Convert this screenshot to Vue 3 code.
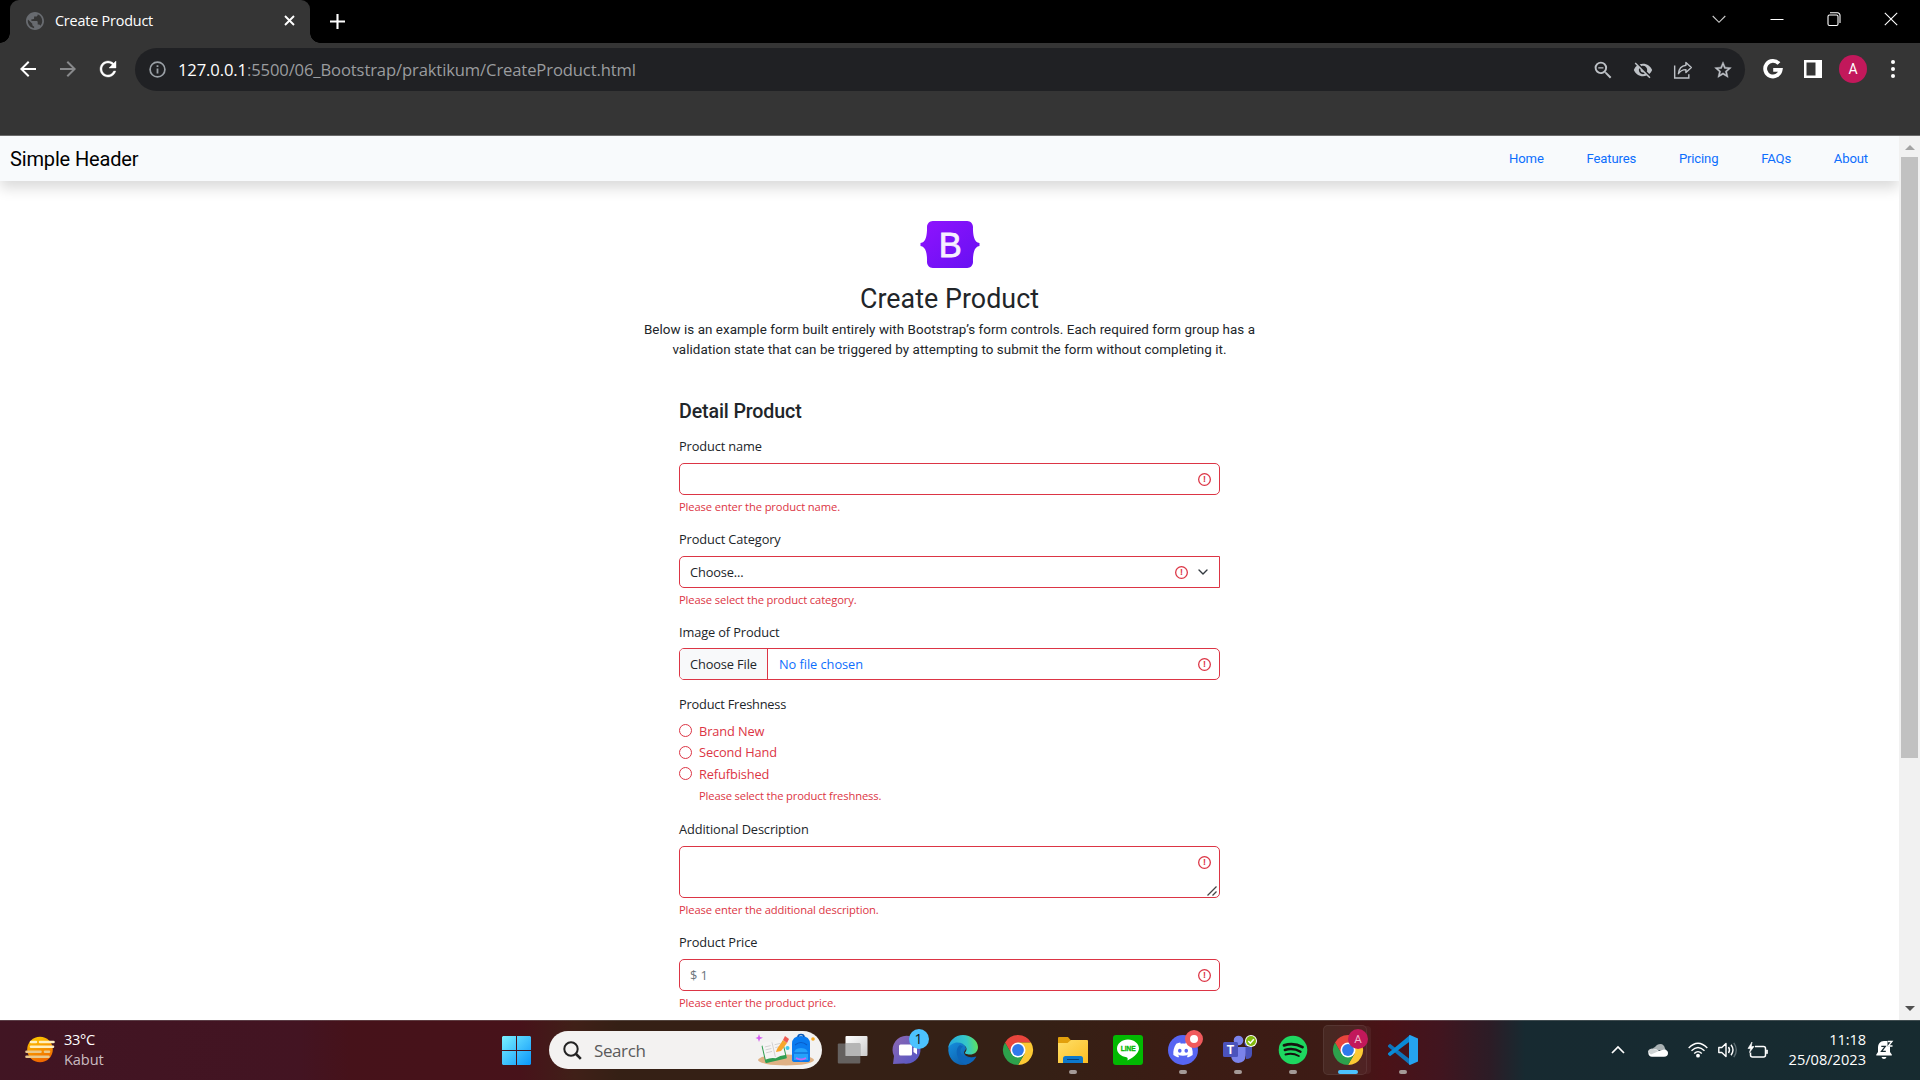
<script setup>
const links = ['Home', 'Features', 'Pricing', 'FAQs', 'About']
const freshness = ['Brand New', 'Second Hand', 'Refufbished']
</script>

<template>
  <div class="desktop">
    <header class="tabstrip">
      <div class="tab">
        <svg class="favicon" viewBox="2 2 20 20"><path fill="#686b70" d="M12 2C6.48 2 2 6.48 2 12s4.48 10 10 10 10-4.48 10-10S17.52 2 12 2zm-1 17.93c-3.95-.49-7-3.85-7-7.93 0-.62.08-1.21.21-1.79L9 15v1c0 1.1.9 2 2 2v1.93zm6.9-2.54c-.26-.81-1-1.39-1.9-1.39h-1v-3c0-.55-.45-1-1-1H8v-2h2c.55 0 1-.45 1-1V7h2c1.1 0 2-.9 2-2v-.41c2.93 1.19 5 4.06 5 7.41 0 2.08-.8 3.97-2.1 5.39z" /></svg>
        <span class="tab-title">Create Product</span>
        <svg class="tab-close" viewBox="0 0 11 11"><path d="M1 1l9 9M10 1l-9 9" stroke="#fff" stroke-width="1.9" /></svg>
      </div>
      <svg class="plus" viewBox="0 0 15 15"><path d="M7.5 0v15M0 7.5h15" stroke="#fff" stroke-width="2.1" /></svg>
      <div class="win-controls">
        <svg viewBox="0 0 14 14"><path d="M.7 4l6.3 6.3L13.300 4" fill="none" stroke="#ccc" stroke-width="1.1" /></svg>
        <svg viewBox="0 0 14 14"><path d="M.5 7.500h13" stroke="#fff" stroke-width="1" /></svg>
        <svg viewBox="0 0 14 14"><g fill="none" stroke="#fff" stroke-width="1.1"><rect x="1" y="3" width="10" height="10.500" rx="1.500" /><path d="M3 .8h7.500a2.500 2.500 0 0 1 2.500 2.500V11" /></g></svg>
        <svg viewBox="0 0 14 14"><path d="M.8 .8l12.400 12.400M13.200 .8L.8 13.200" stroke="#fff" stroke-width="1.100" /></svg>
      </div>
    </header>

    <div class="toolbar">
      <div class="nav-buttons">
        <svg viewBox="0 0 24 24"><path fill="#fff" d="M20 11H7.830l5.590-5.590L12 4l-8 8 8 8 1.410-1.410L7.830 13H20v-2z" /></svg>
        <svg viewBox="0 0 24 24"><path fill="#88898b" d="M4 11h12.170l-5.590-5.590L12 4l8 8-8 8-1.410-1.410L16.170 13H4v-2z" /></svg>
        <svg viewBox="0 0 24 24"><path fill="#fff" stroke="#fff" stroke-width=".4" d="M17.650 6.350C16.200 4.900 14.210 4 12 4c-4.420 0-7.990 3.580-7.990 8s3.570 8 7.990 8c3.730 0 6.840-2.550 7.730-6h-2.080c-.82 2.330-3.040 4-5.650 4-3.310 0-6-2.690-6-6s2.690-6 6-6c1.660 0 3.140.69 4.220 1.780L13 11h7V4l-2.350 2.350z" /></svg>
      </div>
      <div class="omnibox">
        <svg class="info" viewBox="0 0 17 17"><circle cx="8.500" cy="8.500" r="7.400" fill="none" stroke="#9aa0a6" stroke-width="1.700" /><path d="M8.500 7.400v5M8.500 4.200v1.900" stroke="#9aa0a6" stroke-width="1.800" /></svg>
        <span class="url"><b>127.0.0.1</b>:5500/06_Bootstrap/praktikum/CreateProduct.html</span>
        <div class="omni-actions">
          <svg viewBox="0 0 24 24"><path fill="#bdc1c6" d="M15.500 14h-.79l-.28-.27A6.471 6.471 0 0 0 16 9.500 6.500 6.500 0 1 0 9.500 16c1.610 0 3.090-.59 4.230-1.570l.27.28v.79l5 4.990L20.490 19l-4.990-5zm-6 0C7.010 14 5 11.990 5 9.500S7.010 5 9.500 5 14 7.010 14 9.500 11.990 14 9.500 14zM6.800 8.800h5.400v1.400H6.800z" transform="translate(-1.500 -1.500) scale(1.150)" /></svg>
          <svg viewBox="0 0 24 24"><path fill="#bdc1c6" d="M12 7c2.760 0 5 2.240 5 5 0 .65-.13 1.260-.36 1.830l2.920 2.920c1.510-1.260 2.700-2.890 3.430-4.750-1.730-4.390-6-7.500-11-7.500-1.400 0-2.740.25-3.980.7l2.160 2.160C10.740 7.130 11.350 7 12 7zM2 4.270l2.280 2.280.46.46C3.080 8.300 1.780 10.020 1 12c1.730 4.390 6 7.500 11 7.500 1.550 0 3.030-.3 4.380-.84l.42.42L19.730 22 21 20.730 3.270 3 2 4.270zM7.530 9.800l1.550 1.550c-.05.21-.08.43-.08.65 0 1.660 1.340 3 3 3 .22 0 .44-.03.65-.08l1.550 1.550c-.67.33-1.410.53-2.200.53-2.760 0-5-2.240-5-5 0-.79.2-1.530.53-2.200z" /></svg>
          <svg viewBox="0 0 24 24"><g fill="none" stroke="#bdc1c6" stroke-width="1.700"><path d="M2 6.500V21.500h17v-4.500" /><path d="M15.500 3l6.500 6-6.500 6v-3.500c-4 0-7 1.500-9 5 .5-5.500 3.500-9.500 9-10.200z" stroke-linejoin="round" /></g></svg>
          <svg viewBox="0 0 24 24"><path fill="#bdc1c6" stroke="#bdc1c6" stroke-width=".5" d="M22 9.240l-7.190-.62L12 2 9.190 8.630 2 9.240l5.460 4.730L5.820 21 12 17.270 18.180 21l-1.630-7.030L22 9.240zM12 15.400l-3.760 2.270 1-4.280-3.320-2.880 4.380-.38L12 6.100l1.710 4.040 4.380.38-3.320 2.880 1 4.280L12 15.400z" /></svg>
        </div>
      </div>
      <div class="chrome-actions">
        <svg viewBox="0 0 20 20" width="20" height="20"><path d="M15.900 4.600A7.800 7.800 0 1 0 17.700 10.800H10.200" fill="none" stroke="#fff" stroke-width="3.800" /></svg>
        <svg class="panel" viewBox="0 0 18 18" width="18" height="18"><path fill="#fff" fill-rule="evenodd" d="M0 0h18v18H0zM2.500 2.500v13h9v-13z" /></svg>
        <span class="avatar">A</span>
        <svg viewBox="0 0 4 18" width="4" height="18"><circle cx="2" cy="2" r="2" fill="#fff" /><circle cx="2" cy="9" r="2" fill="#fff" /><circle cx="2" cy="16" r="2" fill="#fff" /></svg>
      </div>
    </div>

    <div class="viewport">
      <main class="page">
        <nav class="navbar">
          <span class="brand">Simple Header</span>
          <div class="links"><a v-for="l in links" :key="l">{{ l }}</a></div>
        </nav>

        <svg class="logo" viewBox="0 0 118 94">
          <defs><linearGradient id="bs" x1="0" y1="0" x2="1" y2="1"><stop offset="0" stop-color="#9013fe" /><stop offset="1" stop-color="#6610f2" /></linearGradient></defs>
          <path fill="url(#bs)" d="M24.509 0c-6.733 0-11.715 5.893-11.492 12.284.214 6.140-.064 14.092-2.066 20.577C8.943 39.365 5.547 43.485 0 44.014v5.972c5.547.529 8.943 4.649 10.951 11.153 2.002 6.485 2.280 14.437 2.066 20.577C12.794 88.106 17.776 94 24.510 94H93.500c6.733 0 11.714-5.893 11.491-12.284-.214-6.140.064-14.092 2.066-20.577 2.009-6.504 5.396-10.624 10.943-11.153v-5.972c-5.547-.529-8.934-4.649-10.943-11.153-2.002-6.484-2.280-14.437-2.066-20.577C105.214 5.894 100.233 0 93.500 0H24.508z" />
          <text x="59.500" y="71" text-anchor="middle" font-family="Liberation Sans, sans-serif" font-size="69" fill="#f6f0ff" stroke="#f6f0ff" stroke-width="1.600">B</text>
        </svg>
        <h2>Create Product</h2>
        <p class="lead">Below is an example form built entirely with Bootstrap’s form controls. Each required form group has a<br>validation state that can be triggered by attempting to submit the form without completing it.</p>

        <form>
          <h4>Detail Product</h4>

          <section class="group">
            <label>Product name</label>
            <div class="control"><i class="alert">!</i></div>
            <p class="error">Please enter the product name.</p>
          </section>

          <section class="group">
            <label>Product Category</label>
            <div class="control select">
              <span>Choose...</span><i class="alert">!</i>
              <svg class="caret" viewBox="0 0 10 6"><path d="M1 1l4 4 4-4" fill="none" stroke="#343a40" stroke-width="1.400" stroke-linecap="round" stroke-linejoin="round" /></svg>
            </div>
            <p class="error">Please select the product category.</p>
          </section>

          <section class="group image">
            <label>Image of Product</label>
            <div class="control file"><span class="file-btn">Choose File</span><span class="file-name">No file chosen</span><i class="alert">!</i></div>
          </section>

          <section class="group fresh">
            <label>Product Freshness</label>
            <div v-for="f in freshness" :key="f" class="radio"><i></i><span>{{ f }}</span></div>
            <p class="error">Please select the product freshness.</p>
          </section>

          <section class="group">
            <label>Additional Description</label>
            <div class="control area">
              <i class="alert">!</i>
              <svg class="grip" viewBox="0 0 10 10"><path d="M.5 9.500l9-9M5.500 9.500l4-4" stroke="#444" stroke-width="1.300" /></svg>
            </div>
            <p class="error">Please enter the additional description.</p>
          </section>

          <section class="group">
            <label>Product Price</label>
            <div class="control"><span class="placeholder">$ 1</span><i class="alert">!</i></div>
            <p class="error">Please enter the product price.</p>
          </section>
        </form>
      </main>
      <aside class="scrollbar">
        <svg viewBox="0 0 10 5"><path d="M0 5l5-5 5 5z" fill="#a3a3a3" /></svg>
        <div class="thumb"></div>
        <svg class="down" viewBox="0 0 10 5"><path d="M0 0l5 5 5-5z" fill="#505050" /></svg>
      </aside>
    </div>

    <footer class="taskbar">
      <div class="weather">
        <svg viewBox="0 0 30 27" width="30" height="27">
          <defs><linearGradient id="sun" x1="0" y1="0" x2=".3" y2="1"><stop offset="0" stop-color="#ffcf00" /><stop offset="1" stop-color="#f06a00" /></linearGradient></defs>
          <circle cx="15" cy="13.500" r="12.800" fill="url(#sun)" />
          <g stroke-width="2.600" stroke-linecap="round"><path d="M6 6h5M15 6h13.500M6 10.800h22" stroke="#fff0c0" /><path d="M1.500 15.800h14M20 15.800h4M1.500 20.800h22" stroke="#eac88c" /></g>
        </svg>
        <div class="weather-text"><span>33°C</span><span>Kabut</span></div>
      </div>

      <div class="center">
        <svg class="start" viewBox="0 0 29 29"><defs><linearGradient id="win" x1="0" y1="0" x2="1" y2="1"><stop offset="0" stop-color="#7af0ff" /><stop offset="1" stop-color="#0a96fa" /></linearGradient></defs><path fill="url(#win)" d="M1 0h13v14H0V1zM15 0h13l1 1v13H15zM0 15h14v14H1l-1-1zM15 15h14v13l-1 1H15z" /></svg>

        <div class="search">
          <svg class="glass" viewBox="0 0 19 19"><circle cx="8" cy="8" r="6.700" fill="none" stroke="#222" stroke-width="2" /><path d="M12.500 12.500l5.300 5.300" stroke="#222" stroke-width="2.600" /></svg>
          <span>Search</span>
          <svg class="art" viewBox="0 0 60 32">
            <ellipse cx="30" cy="26" rx="28" ry="5.500" fill="#dfb184" />
            <path d="M3 0l1 3 3 .8-3 1.300L3 8l-1-3-2.500-.9L2 3z" fill="#d45cf0" />
            <g transform="rotate(-13 18 17)"><rect x="7" y="9" width="22" height="18" rx="1" fill="#2f9e50" /><path d="M8 7q5-1.500 10 1 5-2.500 10-1v16.500q-5-1-10 1-5-2-10-1z" fill="#f6f4f4" /><path d="M18 8v15M10 11h6M10 14h6M10 17h6M20 11h6M20 14h6" stroke="#ccc" stroke-width=".8" /></g>
            <path d="M21 15l6-9 4 3-6 8-5 1z" fill="#f9a62b" /><path d="M27 6l2-4 4 3-2 4z" fill="#ef5a50" />
            <path d="M36 26V10q0-8 9-8t9 8v16q0 2-3 2H39q-3 0-3-2z" fill="#0a7bf0" /><path d="M42 3q0-2.500 3-2.500T48 3" fill="none" stroke="#0758b8" stroke-width="1.500" /><path d="M38 26v-6q0-6 7-6t7 6v6z" fill="#25a2fb" /><path d="M38 19h14M39 11q6-5 12 0" stroke="#0a5cc9" stroke-width="1.200" fill="none" /><path d="M40 24q5 3 10 0" stroke="#c36af6" stroke-width="2" fill="none" />
            <circle cx="31.500" cy="14" r="2" fill="#3ec8ec" /><circle cx="57" cy="5" r="1.800" fill="#f8aa22" />
          </svg>
        </div>

        <div class="app">
          <svg viewBox="0 0 32 32"><defs><linearGradient id="tv" x1="0" y1="0" x2="1" y2="1"><stop offset="0" stop-color="#fff" /><stop offset="1" stop-color="#ccc" /></linearGradient></defs><rect x="8.500" y="2" width="22" height="20" rx="1" fill="url(#tv)" /><rect x=".8" y="9.500" width="22.500" height="20" rx="1" fill="#707070" fill-opacity=".82" /><path d="M8.500 9.500h14.800V22H8.500z" fill="#b5b5b5" /></svg>
        </div>
        <div class="app">
          <svg viewBox="0 0 32 32"><defs><linearGradient id="ch" x1="0" y1="0" x2="1" y2="1"><stop offset="0" stop-color="#8e68b0" /><stop offset="1" stop-color="#5055c8" /></linearGradient></defs><path fill="url(#ch)" d="M1 30l1-8A14 14 0 1 1 12 29.500z" /><rect x="7" y="10.500" width="13" height="11" rx="1.500" fill="#fff" /><path d="M21.500 14l3.500-2.500v9L21.500 18z" fill="#fff" /></svg>
          <b class="badge count">1</b>
        </div>
        <div class="app">
          <svg viewBox="0 0 32 32"><defs><linearGradient id="e1" x1="0" y1=".3" x2="1" y2=".2"><stop offset="0" stop-color="#25a8e0" /><stop offset=".6" stop-color="#35c8c8" /><stop offset="1" stop-color="#62e554" /></linearGradient><linearGradient id="e2" x1="0" y1="0" x2="1" y2="1"><stop offset="0" stop-color="#1690df" /><stop offset="1" stop-color="#0b4f9b" /></linearGradient></defs>
            <path fill="url(#e2)" d="M1.500 13C3 8 8 7 12 8c5 1 7 4 7 7l-2 3c0 4 5 6.500 12 4.500C26 28 21 31 16 31 7 31 0 23 1.500 13z" />
            <path fill="#0d66ba" d="M13 11c-5 3-5 14 5 19.700C23 30 27 27 29.500 22.500 23 26 14 23 13.500 17.500c0-2 .5-4 2.500-5z" />
            <path fill="url(#e1)" d="M1.200 14C2 7 8 1 16 1s15 6 15 12c0 5-4 7.500-8 7.500-3.500 0-5.500-1-5-2 .5-.8 1.500-1.500 1.500-3.500 0-3-4-6.500-9-6.500-4 0-8 2.500-9.300 5.500z" />
          </svg>
        </div>
        <div class="app"><svg viewBox="0 0 32 32"><use href="#chrome-mark" /></svg></div>
        <div class="app run">
          <svg viewBox="0 0 32 32"><defs><linearGradient id="fo" x1="0" y1="0" x2="1" y2="1"><stop offset="0" stop-color="#ffdf68" /><stop offset="1" stop-color="#fbbd22" /></linearGradient></defs><path d="M1 4q0-1 1-1h9l3 3.500h9V12H1z" fill="#e2a00c" /><path d="M1 9h9.500L14 6h16q1 0 1 1v22H1z" fill="url(#fo)" /><path d="M6 29v-4.500Q6 22 8.500 22h15q2.500 0 2.500 2.500V29z" fill="#0d78cb" /><path d="M10 25.500h12" stroke="#063f78" stroke-width="1" /></svg>
        </div>
        <div class="app">
          <svg viewBox="0 0 32 32"><rect x="1" y="1" width="30" height="30" rx="3" fill="#02b902" /><path d="M16 5.500c-6 0-11 4-11 9 0 4.500 4 8 9.500 8.700 1.500.4 1.200 1.300 1 3.300 4-2 11.500-7 11.500-12 0-5-5-9-11-9z" fill="#fff" /><text x="16.200" y="17.300" text-anchor="middle" font-family="Liberation Sans, sans-serif" font-weight="bold" font-size="6.600" fill="#02b902" stroke="#02b902" stroke-width=".3">LINE</text></svg>
        </div>
        <div class="app run">
          <svg viewBox="0 0 32 32"><circle cx="16" cy="16" r="15" fill="#5765f2" /><path transform="translate(6.300 6.300) scale(.81)" fill="#fff" d="M20.317 4.370a19.791 19.791 0 00-4.885-1.515.074.074 0 00-.079.037c-.211.375-.445.865-.608 1.250-1.845-.276-3.680-.276-5.487 0-.164-.393-.406-.874-.618-1.250a.077.077 0 00-.079-.037 19.736 19.736 0 00-4.885 1.515.07.07 0 00-.032.028C.533 9.046-.319 13.580.099 18.058a.082.082 0 00.031.056c2.053 1.508 4.041 2.423 5.993 3.029a.078.078 0 00.084-.028c.462-.63.873-1.295 1.226-1.994a.076.076 0 00-.042-.106c-.653-.248-1.274-.55-1.872-.892a.077.077 0 01-.008-.128c.126-.094.252-.192.372-.291a.074.074 0 01.078-.011c3.928 1.793 8.180 1.793 12.061 0a.074.074 0 01.079.010c.12.099.246.198.373.292a.077.077 0 01-.007.128 12.299 12.299 0 01-1.873.891.077.077 0 00-.041.107c.36.698.772 1.363 1.225 1.993a.076.076 0 00.084.029c1.961-.607 3.950-1.522 6.002-3.029a.077.077 0 00.031-.055c.5-5.177-.838-9.674-3.549-13.660a.061.061 0 00-.031-.029zM8.020 15.331c-1.183 0-2.157-1.086-2.157-2.419 0-1.333.956-2.419 2.157-2.419 1.211 0 2.176 1.095 2.157 2.419 0 1.333-.956 2.419-2.157 2.419zm7.975 0c-1.183 0-2.157-1.086-2.157-2.419 0-1.333.955-2.419 2.157-2.419 1.211 0 2.176 1.095 2.157 2.419 0 1.333-.946 2.419-2.157 2.419z" /></svg>
          <b class="badge record"></b>
        </div>
        <div class="app run">
          <svg viewBox="0 0 32 32"><circle cx="16.500" cy="6.500" r="4.800" fill="#7b83eb" /><circle cx="26" cy="9" r="3.500" fill="#5059c9" /><path d="M22 13h8v7q0 5-6 5z" fill="#4a53bc" /><path d="M9 13h14.500v8.500q0 7-7.200 7.500Q10 29 9 22z" fill="#7b83eb" /><rect x="1" y="8" width="15" height="15" rx="1.500" fill="#4b53bc" /><text x="8.500" y="19.800" text-anchor="middle" font-family="Liberation Sans, sans-serif" font-weight="bold" font-size="12" fill="#fff">T</text><circle cx="29" cy="7" r="6" fill="#fff" /><circle cx="29" cy="7" r="5" fill="#83b80d" /><path d="M26.300 7l2 2.200 3.500-4" fill="none" stroke="#fff" stroke-width="1.500" /></svg>
        </div>
        <div class="app run">
          <svg viewBox="0 0 32 32"><circle cx="16" cy="16" r="14.300" fill="#1ed760" /><g fill="none" stroke="#15130f" stroke-linecap="round"><path d="M7 11.300q10-3 18.500 1.800" stroke-width="2.800" /><path d="M7.800 16q8.500-2.500 15.700 1.700" stroke-width="2.400" /><path d="M8.500 20.500q7-2 13.300 1.500" stroke-width="1.900" /></g></svg>
        </div>
        <div class="app run active">
          <svg viewBox="0 0 32 32">
            <g id="chrome-mark"><path d="M3 8.500A15 15 0 0 1 29 8.500H16L9.500 20z" fill="#e8453c" /><path d="M29 8.500A15 15 0 0 1 16 31l6.500-11.250L16 8.500z" fill="#fcc934" /><path d="M16 31A15 15 0 0 1 3 8.500l6.500 11.250 13 0z" fill="#2da14c" /><circle cx="16" cy="16" r="7.500" fill="#fff" /><circle cx="16" cy="16" r="5.900" fill="#3079ea" /></g>
          </svg>
          <b class="badge profile">A</b>
        </div>
        <div class="app run">
          <svg viewBox="0 0 32 32"><path d="M1 11.500l2-1.800 20.500 16L23 31 1 12.800z" fill="#0f74bb" /><path d="M1 20.500l2 1.800L23.500 7 23 1 1 19.200z" fill="#0a8ad6" /><path d="M23 1l8 3.500v23L23 31q-1 0-1-1V2q0-1 1-1z" fill="#25a3f0" /></svg>
        </div>
      </div>

      <div class="tray">
        <svg class="up" viewBox="0 0 14 8"><path d="M1 7l6-6 6 6" fill="none" stroke="#fff" stroke-width="1.700" /></svg>
        <svg class="cloud" viewBox="0 0 20 13"><path d="M3 8Q4 4 7 3q2-3 5.500-3T17 4.500L20 9l-9-3z" fill="#a9b1b3" /><path d="M4 12.800A3.800 3.800 0 0 1 3.300 5.300Q8 4 11 7l5-1.500q4 .5 4 3.800T16 12.800z" fill="#fff" /><path d="M0 8q0-3 4-3.500L11 7l-8 3.500z" fill="#cfd4d5" /></svg>
        <svg class="wifi" viewBox="0 0 20 16"><g fill="none" stroke="#fff" stroke-width="1.400"><path d="M.7 6Q10-3.500 19.300 6" /><path d="M3.500 8.800q6.500-6.500 13 0" /><path d="M6.200 11.500q3.800-3.800 7.600 0" /></g><circle cx="10" cy="13.700" r="1.900" fill="#fff" /></svg>
        <svg class="sound" viewBox="0 0 20 18"><g fill="none" stroke="#fff" stroke-width="1.400"><path d="M.8 6.500h3L8 2.500v13l-4.200-4h-3z" stroke-linejoin="round" /><path d="M10.500 6q2 3 0 6M13 3.800q4 5.200 0 10.400" /><path d="M15.800 1.800q5 7.200 0 14.400" stroke="#5b6b70" /></g></svg>
        <svg class="battery" viewBox="0 0 20 17"><path d="M7 4.500h8.500q2 0 2 2v6.500q0 2-2 2h-11q-2 0-2-2v-2.500" fill="none" stroke="#fff" stroke-width="1.500" /><path d="M18.300 8h1.200v3.500h-1.200z" fill="#fff" stroke="#fff" stroke-width=".7" /><path d="M4 0L0 6.500h2.600L1.500 10.500 6 4.500H3.300z" fill="#fff" stroke="#fff" stroke-width=".6" /></svg>
        <div class="clock"><span>11:18</span><span>25/08/2023</span></div>
        <svg class="bell" viewBox="0 0 18 20"><path d="M8 1C4 1 2 4 2 7.500V12L.3 14.500v1h15.500v-1L14 12V1z" fill="#fff" /><path d="M5.500 17h5q-.5 2-2.500 2t-2.500-2z" fill="#fff" /><path d="M5.300 6.300H9.300L5.500 11.300h4.300" fill="none" stroke="#172a30" stroke-width="1.300" /><path d="M11.500 1h5v5.500h-5z" fill="#172a30" /><path d="M11.800 1.500h4.200L12.300 6h4.200" fill="none" stroke="#fff" stroke-width="1.300" /></svg>
      </div>
    </footer>
  </div>
</template>

<style>
body { margin: 0; overflow: hidden; }
</style>

<style scoped>
.desktop { width: 1920px; height: 1080px; display: flex; flex-direction: column; overflow: hidden; font-family: "Open Sans", sans-serif; background: #fff; }
svg { display: block; flex: none; overflow: visible; }

.tabstrip { height: 43px; flex: none; background: #000; display: flex; align-items: center; padding-left: 10px; }
.tab { position: relative; box-sizing: border-box; width: 300px; height: 43px; background: #353535; border-radius: 9px 9px 0 0; display: flex; align-items: center; padding: 0 15px 2px 16px; }
.tab::before, .tab::after { content: ""; position: absolute; bottom: 0; width: 10px; height: 10px; }
.tab::before { left: -10px; background: radial-gradient(circle at 0 0, transparent 9.5px, #353535 10px); }
.tab::after { right: -10px; background: radial-gradient(circle at 100% 0, transparent 9.5px, #353535 10px); }
.favicon { width: 18px; height: 18px; }
.tab-title { color: #fff; font-size: 14.4px; letter-spacing: -.2px; margin-left: 11px; flex: 1; }
.tab-close { width: 11px; height: 11px; }
.plus { width: 15px; height: 15px; margin-left: 20px; }
.win-controls { margin-left: auto; display: flex; gap: 43.2px; padding: 0 22px 6px 0; }
.win-controls svg { width: 14px; height: 14px; }

.toolbar { box-sizing: border-box; height: 93px; flex: none; background: #353535; border-bottom: 1px solid #6a6a6a; display: flex; align-items: flex-start; padding: 5px 0 0 15.500px; }
.nav-buttons { width: 119.500px; display: flex; gap: 16.300px; padding-top: 8.500px; }
.nav-buttons svg { width: 24px; height: 24px; }
.omnibox { width: 1610px; box-sizing: border-box; height: 43px; padding: 0 12.500px 0 14px; border-radius: 22px; background: #202124; display: flex; align-items: center; }
.info { width: 17px; height: 17px; }
.url { font-size: 16.6px; color: #9a9c9f; margin-left: 12px; letter-spacing: -.12px; line-height: 24px; }
.url b { font-weight: 400; color: #fff; }
.omni-actions { margin-left: auto; display: flex; gap: 20px; }
.omni-actions svg { width: 20px; height: 20px; }
.chrome-actions { flex: 1; display: flex; align-items: center; height: 43px; padding: 0 0 2px 17.500px; box-sizing: border-box; }
.chrome-actions .panel { margin: 0 17.500px 0 21px; }
.avatar { width: 28px; height: 28px; margin-right: 23.500px; border-radius: 50%; background: #c2185b; color: #fff; font: 14px/28px Roboto, sans-serif; text-align: center; }

.viewport { height: 884px; flex: none; display: flex; overflow: hidden; }
.page { width: 1899px; color: #212529; font-size: 12.8px; letter-spacing: -.12px; }
.navbar { box-sizing: border-box; height: 45px; padding: 0 31px 0 10px; background: #f8fafc; box-shadow: 0 7px 13px rgba(0, 0, 0, .15); display: flex; align-items: center; justify-content: space-between; font-family: Roboto, sans-serif; }
.brand { color: #000; font-size: 20px; line-height: 24px; letter-spacing: -.15px; padding-top: 1px; }
.links { display: flex; gap: 42.800px; font-size: 13.100px; letter-spacing: -.14px; color: #0d6efd; }
.logo { width: 60px; height: 47px; margin: 40px auto 0; }
h2 { margin: 15px 0 0; height: 32px; font: 400 26.800px/32px Roboto, sans-serif; letter-spacing: .05px; text-align: center; }
.lead { margin: 5px 0 0; text-align: center; font: 13.400px/20px Roboto, sans-serif; letter-spacing: .055px; white-space: nowrap; }
form { width: 541px; margin: 40px auto 0; }
h4 { margin: 0 0 12px; font: 500 19.600px/24px Roboto, sans-serif; letter-spacing: -.12px; }
.group { margin-bottom: 13px; }
label { display: block; height: 20px; line-height: 20px; margin-bottom: 7px; }
.control { position: relative; box-sizing: border-box; height: 32px; border: 1px solid #dc3545; border-radius: 5px; display: flex; align-items: center; padding: 0 8px 0 10px; overflow: hidden; }
.alert { margin-left: auto; width: 13px; height: 13px; box-shadow: inset 0 0 0 1.300px #dc3545; border-radius: 50%; color: #dc3545; font: bold 9px/13px "Liberation Sans", sans-serif; letter-spacing: 0; text-align: center; }
.error { margin: 3px 0 0; height: 18px; line-height: 18px; font-size: 11.200px; color: #dc3545; letter-spacing: -.11px; }
.select { border-radius: 5px 0 0 5px; padding-right: 11px; }
.caret { width: 10px; height: 6px; margin-left: 10px; }
.image label { margin-bottom: 6px; }
.image { margin-bottom: 14px; }
.file { padding-left: 0; }
.file-btn { box-sizing: border-box; width: 88px; height: 30px; line-height: 30px; background: #f8f9fa; border-right: 1px solid #dc3545; padding-left: 10px; }
.file-name { color: #0d6efd; margin-left: 11px; letter-spacing: -.05px; }
.placeholder { color: #6c757d; }
.fresh { margin-bottom: 14px; }
.fresh label { margin-bottom: 6px; letter-spacing: -.2px; }
.radio { display: flex; align-items: center; height: 21.500px; color: #dc3545; line-height: 20px; }
.radio i { box-sizing: border-box; width: 13px; height: 13px; border: 1px solid #dc3545; border-radius: 50%; margin-right: 7px; }
.fresh .error { margin: 2.500px 0 0 20px; letter-spacing: -.14px; }
.area { height: 52px; align-items: flex-start; padding-top: 9px; }
.grip { position: absolute; right: 2px; bottom: 1.500px; width: 10px; height: 10px; }

.scrollbar { width: 21px; background: #f1f1f1; display: flex; flex-direction: column; align-items: center; }
.scrollbar svg { width: 10px; height: 5px; margin-top: 9px; }
.thumb { width: 17px; height: 601px; margin-top: 7px; background: #c1c1c1; }
.scrollbar .down { margin-top: auto; margin-bottom: 9px; }

.taskbar { box-sizing: border-box; height: 60px; flex: none; display: flex; align-items: stretch; border-top: 1px solid rgba(140, 140, 140, .35); background: linear-gradient(90deg, #411523 0, #431422 300px, #46121a 350px, #47121a 520px, #402018 575px, #352015 620px, #352015 1040px, #3b1c14 1180px, #3d1b15 1330px, #4a1217 1385px, #41151f 1440px, #2c1c26 1490px, #172a31 1525px, #172b30 100%); color: #fff; }
.weather { width: 502px; display: flex; padding-left: 25px; box-sizing: border-box; font-size: 14.600px; }
.weather svg { margin-top: 15px; }
.weather-text { margin: 7.500px 0 0 9px; display: flex; flex-direction: column; line-height: 20px; letter-spacing: -.3px; }
.weather-text span:last-child { color: #c9bbc0; letter-spacing: -.1px; }
.center { display: flex; }
.start { width: 29px; height: 29px; margin-top: 15px; }
.search { width: 273px; height: 38px; margin: 10px 3px 0 18px; box-sizing: border-box; border-radius: 19px; background: #f3f2f1; display: flex; align-items: center; padding: 0 6px 0 14px; color: #5a5a5a; font-size: 17px; letter-spacing: -.4px; }
.glass { width: 19px; height: 19px; }
.search span { margin-left: 12px; flex: 1; padding-top: 1px; }
.art { width: 60px; height: 32px; }
.app { position: relative; width: 55px; display: flex; justify-content: center; }
.app > svg { width: 32px; height: 32px; margin-top: 13px; position: relative; }
.run::after { content: ""; position: absolute; left: 23.500px; top: 49px; width: 8px; height: 4px; border-radius: 2px; background: #a49a97; }
.active::after { left: 17.500px; width: 20px; background: #4cc2ff; }
.active::before { content: ""; position: absolute; left: 3px; top: 4px; box-sizing: border-box; width: 44px; height: 50px; border-radius: 5px; background: rgba(255, 255, 255, .06); border: 1px solid rgba(255, 255, 255, .07); box-shadow: 5px 0 0 -1px rgba(255, 255, 255, .05); }
.badge { position: absolute; display: block; border-radius: 50%; text-align: center; font-weight: 400; box-sizing: border-box; }
.count { left: 28.500px; top: 8px; width: 20px; height: 20px; background: #4cc2ff; color: #111; font-size: 14px; line-height: 20px; }
.record { left: 30px; top: 9px; width: 18px; height: 18px; background: #fff; border: 5.500px solid #f05a5c; }
.profile { left: 28px; top: 8px; width: 20px; height: 20px; background: #c2185b; color: #f3b6cd; font: 11.500px/20px Roboto, sans-serif; }
.tray { margin-left: auto; display: flex; align-items: center; padding-right: 26px; }
.tray svg { margin-top: -1px; }
.up { width: 14px; height: 8px; margin-right: 23px; }
.cloud { width: 20px; height: 13px; margin-right: 20px; }
.wifi { width: 20px; height: 16px; margin-right: 10px; }
.sound { width: 20px; height: 18px; margin-right: 10px; }
.battery { width: 20px; height: 17px; margin-right: 21px; }
.clock { display: flex; flex-direction: column; align-items: flex-end; font-size: 14.600px; line-height: 20px; letter-spacing: 0; width: 77px; white-space: nowrap; padding-bottom: 4px; }
.clock span:first-child { letter-spacing: -.1px; }
.bell { width: 18px; height: 20px; margin-left: 10px; }
</style>
